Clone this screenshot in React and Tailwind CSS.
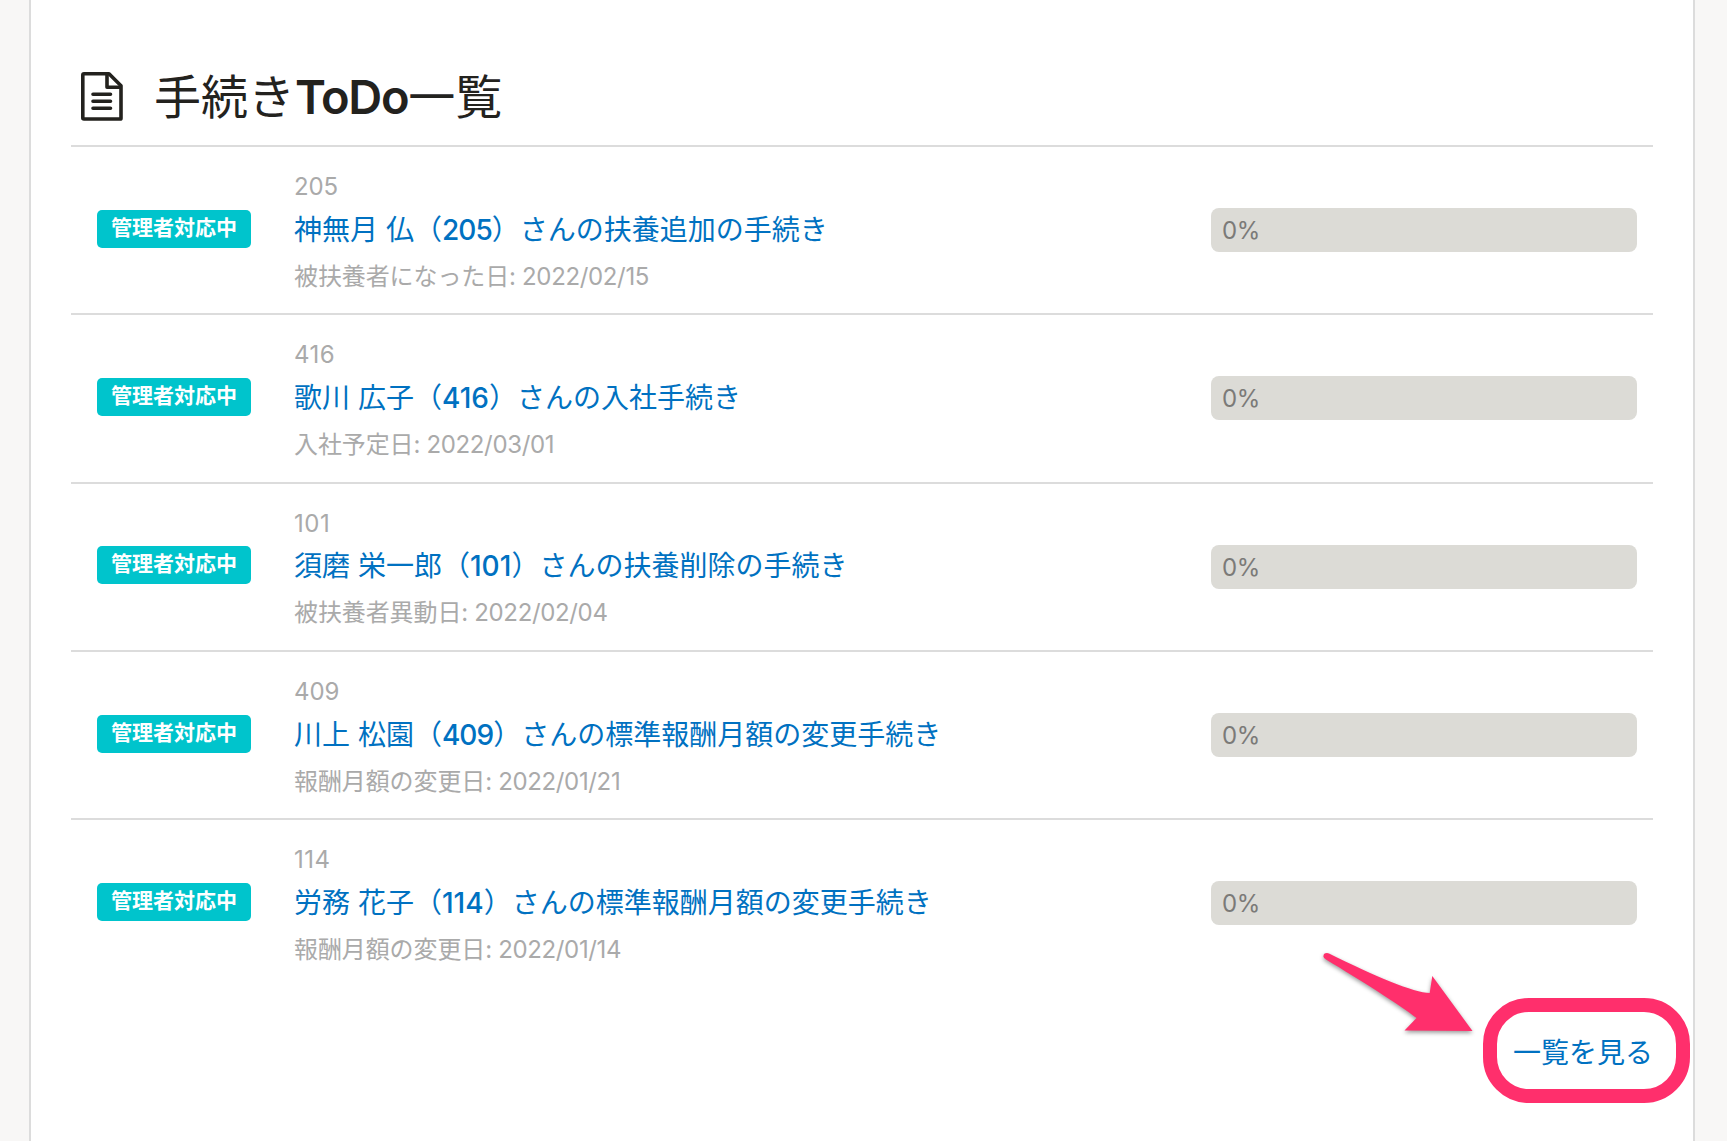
const FONT = "font-[Inter,'Noto_Sans_CJK_JP',sans-serif]";

const TODOS = [
  { id: '205', before: '神無月 仏（', after: '）さんの扶養追加の手続き', label: '被扶養者になった日', date: '2022/02/15' },
  { id: '416', before: '歌川 広子（', after: '）さんの入社手続き', label: '入社予定日', date: '2022/03/01' },
  { id: '101', before: '須磨 栄一郎（', after: '）さんの扶養削除の手続き', label: '被扶養者異動日', date: '2022/02/04' },
  { id: '409', before: '川上 松園（', after: '）さんの標準報酬月額の変更手続き', label: '報酬月額の変更日', date: '2022/01/21' },
  { id: '114', before: '労務 花子（', after: '）さんの標準報酬月額の変更手続き', label: '報酬月額の変更日', date: '2022/01/14' },
];

function DocumentIcon() {
  return (
    <svg width="42" height="49" viewBox="0 0 42 49" fill="none" stroke="#23221e" strokeWidth="3.6" strokeLinejoin="round">
      <path d="M3 1.8H28L40 13.8V46.2Q40 47 39.200 47H3Q1.800 47 1.800 46V3Q1.800 1.800 3 1.800Z" />
      <path d="M26 2V15.300H40" />
      <path d="M12 22.300H29.500M12 29.300H29.500M12 36.300H29.500" strokeLinecap="round" />
    </svg>
  );
}

function TodoRow({ todo }) {
  // The digit 1 is narrow, so ids that contain it get looser tracking.
  const narrow = todo.id.includes('1');
  return (
    <li className="flex h-[168.25px] border-t-2 border-[#dcdcdc]">
      <div className="w-[223px] pt-[62.9px] pl-[26px]">
        <span className="flex h-[38px] w-[154px] justify-center rounded-[5px] bg-[#00c4cc] text-[21px] leading-[36px] font-bold whitespace-nowrap text-white">
          管理者対応中
        </span>
      </div>
      <div className="flex-1 pt-[22px] text-2xl whitespace-nowrap text-[#aaaaaa]">
        <p className={narrow ? 'leading-[36px] tracking-[0.5px]' : 'leading-[36px] tracking-[-0.1px]'}>{todo.id}</p>
        <p className="-mt-[0.2px] text-[28px] leading-[50px] text-[#0071c1]">
          <a href="#">
            {todo.before}
            <span className={narrow ? 'font-medium tracking-[0.1px]' : 'font-medium tracking-[-0.9px]'}>{todo.id}</span>
            {todo.after}
          </a>
        </p>
        <p className="leading-[43px]">
          <span className="tracking-[-0.1px]">{todo.label}</span>
          <span className="tracking-[-0.35px]">: {todo.date}</span>
        </p>
      </div>
      <div className="pt-[61px] pr-4">
        <div className="h-11 w-[426px] rounded-lg bg-[#dcdbd6] pl-[11px] text-2xl leading-[45px] tracking-[-0.3px] text-[#7b7a78]">0%</div>
      </div>
    </li>
  );
}

function Arrow() {
  return (
    <svg
      className="absolute top-[-66px] left-[-180px] drop-shadow-[0_2px_2px_rgba(0,0,0,0.4)]"
      width="160"
      height="90"
      viewBox="1317 946 160 90"
      fill="#ff2f6c"
    >
      <path d="M1327 953Q1323 953 1323.500 957Q1324 958 1326 959.500C1360 980 1400 1005 1416.500 1018L1404.500 1030.500L1472.500 1031L1432.300 976L1429.700 993C1414 993 1375 976 1329 953.500Q1328 953 1327 953Z" />
    </svg>
  );
}

export default function App() {
  return (
    <div className={`h-[1141px] overflow-hidden bg-[#f8f7f6] pr-8 pl-[29px] ${FONT}`} lang="ja">
      <main className="h-full border-x-2 border-[#dcdcdc] bg-white px-10">
        <header className="flex h-[145px] items-start pt-[72px] pl-[10px] text-[#23221e]">
          <DocumentIcon />
          <h1 className="-mt-[5px] ml-[31px] text-[47px] leading-[60px] whitespace-nowrap">
            手続き<span className="font-semibold tracking-[-1.3px]">ToDo</span>一覧
          </h1>
        </header>
        <ul>
          {TODOS.map((todo) => (
            <TodoRow key={todo.id} todo={todo} />
          ))}
        </ul>
        <div className="flex justify-end pt-[46px]">
          <div className="relative text-[28px] leading-[42px] text-[#0071c1]">
            <a href="#">一覧を見る</a>
            <div className="absolute top-[-34px] left-[-30px] h-[105px] w-[207px] rounded-[46px] border-[14px] border-[#ff2f6c]">
              <Arrow />
            </div>
          </div>
        </div>
      </main>
    </div>
  );
}
